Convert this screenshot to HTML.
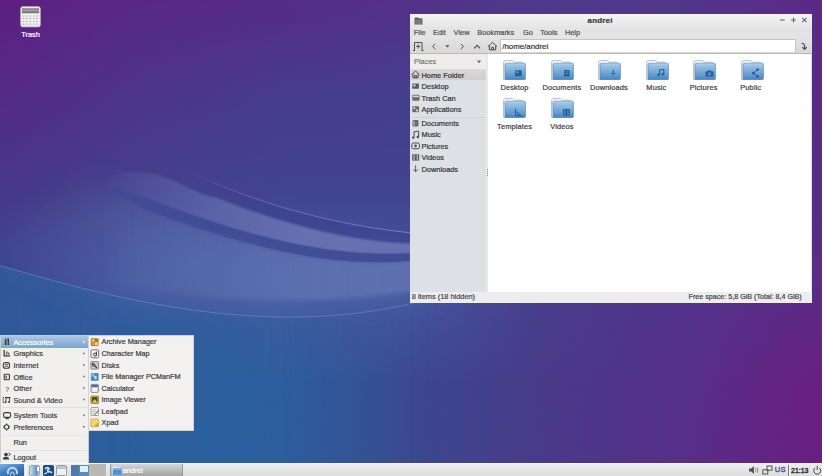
<!DOCTYPE html>
<html><head><meta charset="utf-8">
<style>
*{margin:0;padding:0;box-sizing:border-box}
html,body{width:822px;height:476px;overflow:hidden}
body{position:relative;font-family:"Liberation Sans",sans-serif;font-size:7.4px;color:#3c3c3c;background:#42408a}
.abs{position:absolute}
#wall{position:absolute;left:0;top:0;width:822px;height:476px;overflow:hidden}
.wl{position:absolute;left:0;top:0;width:822px;height:476px}
.t{position:absolute;white-space:nowrap;line-height:10px;-webkit-text-stroke:0.2px currentColor}
/* window */
#win{position:absolute;left:410px;top:14px;width:402px;height:289px;background:#dcdcdc;overflow:hidden}
#title{position:absolute;left:0;top:0;width:402px;height:13px;background:linear-gradient(#f4f4f4,#e6e6e6)}
#menubar{position:absolute;left:0;top:13px;width:402px;height:12px;background:#e4e4e4;color:#505050}
#toolbar{position:absolute;left:0;top:25px;width:402px;height:15px;background:linear-gradient(#e2e2e2,#d8d8d8);border-bottom:1px solid #b9b9b9}
#side{position:absolute;left:0;top:40px;width:76px;height:238px;background:#dde1e6}
#sidehead{position:absolute;left:0;top:0;width:77px;height:15px;background:#eeedeb}
#main{position:absolute;left:78px;top:40px;width:323px;height:238px;background:#fff}
#status{position:absolute;left:0;top:278px;width:402px;height:11px;background:#ededed}
.lab{color:#3a3a3a}
.mi{color:#3a3a3a}
.menu{position:absolute;background:#f0efee;border:1px solid #c9c9c9}
</style></head><body>
<div id="wall"><!--WALL-->
<div class="wl" style="background:linear-gradient(to right,#5e1f82 0px,#5a2886 137px,#562c87 274px,#543188 411px,#4f3a8c 548px,#52368b 685px,#5c2a86 822px);"></div>
<div class="wl" style="background:linear-gradient(to right,#552a86 0px,#4d3589 137px,#473c8b 274px,#443f8c 411px,#4a3a8b 548px,#523289 685px,#5a2b86 822px);-webkit-mask-image:linear-gradient(to bottom,transparent 0px,#000 95px);mask-image:linear-gradient(to bottom,transparent 0px,#000 95px);"></div>
<div class="wl" style="background:linear-gradient(to right,#473988 0px,#45408c 137px,#42448e 274px,#42448e 411px,#463f8c 548px,#4e368a 685px,#582c86 822px);-webkit-mask-image:linear-gradient(to bottom,transparent 95px,#000 190px);mask-image:linear-gradient(to bottom,transparent 95px,#000 190px);"></div>
<div class="wl" style="background:linear-gradient(to right,#3a4890 0px,#44549c 137px,#4a5ca2 274px,#4658a0 411px,#483d8b 548px,#52338a 685px,#5a2c86 822px);-webkit-mask-image:linear-gradient(to bottom,transparent 190px,#000 285px);mask-image:linear-gradient(to bottom,transparent 190px,#000 285px);"></div>
<div class="wl" style="background:linear-gradient(to right,#2d5e9e 0px,#2a62a0 137px,#2b60a0 274px,#3c488f 411px,#493a89 548px,#56308a 685px,#6a2080 822px);-webkit-mask-image:linear-gradient(to bottom,transparent 285px,#000 380px);mask-image:linear-gradient(to bottom,transparent 285px,#000 380px);"></div>
<div class="wl" style="background:linear-gradient(to right,#2d5e9e 0px,#2a62a0 137px,#2b60a0 274px,#3c488f 411px,#493a89 548px,#572e88 685px,#6a1e80 822px);-webkit-mask-image:linear-gradient(to bottom,transparent 380px,#000 476px);mask-image:linear-gradient(to bottom,transparent 380px,#000 476px);"></div>
<!--/WALL-->
<svg class="wl" width="822" height="476" viewBox="0 0 822 476">
<defs>
<filter id="b12" x="-50%" y="-50%" width="200%" height="200%"><feGaussianBlur stdDeviation="16"/></filter>
<filter id="b3" x="-20%" y="-50%" width="140%" height="200%"><feGaussianBlur stdDeviation="2"/></filter>
<filter id="b1" x="-10%" y="-50%" width="120%" height="200%"><feGaussianBlur stdDeviation="0.7"/></filter>
<linearGradient id="fadeC" gradientUnits="userSpaceOnUse" x1="100" y1="0" x2="440" y2="0">
<stop offset="0" stop-color="#5a6eae" stop-opacity="0"/>
<stop offset="0.3" stop-color="#5a6eae" stop-opacity="0.5"/>
<stop offset="0.6" stop-color="#5e70b0" stop-opacity="0.9"/>
<stop offset="1" stop-color="#6070b0" stop-opacity="1"/>
</linearGradient>
<linearGradient id="fadeA" gradientUnits="userSpaceOnUse" x1="100" y1="0" x2="440" y2="0">
<stop offset="0" stop-color="#5c64a8" stop-opacity="0"/>
<stop offset="0.15" stop-color="#5c64a8" stop-opacity="0.45"/>
<stop offset="0.35" stop-color="#6068ac" stop-opacity="0.85"/>
<stop offset="0.6" stop-color="#6670b0" stop-opacity="1"/>
<stop offset="1" stop-color="#6a70b2" stop-opacity="1"/>
</linearGradient>
<filter id="b15" x="-20%" y="-50%" width="140%" height="200%"><feGaussianBlur stdDeviation="1.3"/></filter>
<linearGradient id="fadeB" gradientUnits="userSpaceOnUse" x1="100" y1="0" x2="440" y2="0">
<stop offset="0" stop-color="#3f4c95" stop-opacity="0"/>
<stop offset="0.1" stop-color="#3f4c95" stop-opacity="0.8"/>
<stop offset="1" stop-color="#3f4c95" stop-opacity="0.9"/>
</linearGradient>
<linearGradient id="fadeL" gradientUnits="userSpaceOnUse" x1="185" y1="0" x2="440" y2="0">
<stop offset="0" stop-color="#8a90d0" stop-opacity="0"/>
<stop offset="0.25" stop-color="#8a90d0" stop-opacity="0.45"/>
<stop offset="1" stop-color="#8a94d4" stop-opacity="0.75"/>
</linearGradient>
<linearGradient id="fadeBl" gradientUnits="userSpaceOnUse" x1="0" y1="0" x2="440" y2="0">
<stop offset="0" stop-color="#2e5a9b" stop-opacity="0.85"/>
<stop offset="0.5" stop-color="#2c5e9e" stop-opacity="0.5"/>
<stop offset="1" stop-color="#35529a" stop-opacity="0"/>
</linearGradient>
<linearGradient id="fadeD" gradientUnits="userSpaceOnUse" x1="190" y1="0" x2="440" y2="0">
<stop offset="0" stop-color="#383a86" stop-opacity="0"/>
<stop offset="0.3" stop-color="#383a86" stop-opacity="0.35"/>
<stop offset="1" stop-color="#383a86" stop-opacity="0.4"/>
</linearGradient>
<linearGradient id="vC" gradientUnits="userSpaceOnUse" x1="0" y1="240" x2="0" y2="300">
<stop offset="0" stop-color="#6470b0" stop-opacity="0.9"/>
<stop offset="1" stop-color="#5a74b2" stop-opacity="0.9"/>
</linearGradient>
<linearGradient id="fadeS" gradientUnits="userSpaceOnUse" x1="0" y1="0" x2="440" y2="0">
<stop offset="0" stop-color="#5670ae" stop-opacity="0.05"/>
<stop offset="0.4" stop-color="#5670ae" stop-opacity="0.5"/>
<stop offset="1" stop-color="#5670ae" stop-opacity="0.6"/>
</linearGradient>
</defs>
<path d="M0.0 265.6 L6.0 267.4 L12.0 269.1 L18.0 270.8 L24.0 272.5 L30.0 274.2 L36.0 275.9 L42.0 277.6 L48.0 279.2 L54.0 280.8 L60.0 282.4 L66.0 284.0 L72.0 285.5 L78.0 287.1 L84.0 288.6 L90.0 290.0 L96.0 291.5 L102.0 292.9 L108.0 294.2 L114.0 295.6 L120.0 296.9 L126.0 298.2 L132.0 299.4 L138.0 300.7 L144.0 301.8 L150.0 303.0 L156.0 304.1 L162.0 305.1 L168.0 306.2 L174.0 307.2 L180.0 308.1 L186.0 309.0 L192.0 309.9 L198.0 310.7 L204.0 311.5 L210.0 312.2 L216.0 312.9 L222.0 313.5 L228.0 314.1 L234.0 314.6 L240.0 315.1 L246.0 315.5 L252.0 315.9 L258.0 316.2 L264.0 316.5 L270.0 316.7 L276.0 316.9 L282.0 317.0 L288.0 317.0 L294.0 317.0 L300.0 316.9 L306.0 316.8 L312.0 316.6 L318.0 316.3 L324.0 316.0 L330.0 315.6 L336.0 315.2 L342.0 314.7 L348.0 314.1 L354.0 313.4 L360.0 312.7 L366.0 311.9 L372.0 311.0 L378.0 310.1 L384.0 309.1 L390.0 308.0 L396.0 306.8 L402.0 305.6 L408.0 304.3 L412.0 303.4 L440.0 297.0 L440.0 476.0 L0.0 476.0 Z" fill="url(#fadeBl)" filter="url(#b1)"/>
<path d="M0.0 228.0 L40.0 215.0 L70.0 200.0 L100.0 186.5 L108.0 188.5 L120.0 195.0 L132.0 202.0 L142.0 208.0 L150.0 210.7 L156.0 213.0 L162.0 215.2 L168.0 217.4 L174.0 219.6 L180.0 221.7 L186.0 223.8 L192.0 225.8 L198.0 227.9 L204.0 229.9 L210.0 231.8 L216.0 233.7 L222.0 235.6 L228.0 237.4 L234.0 239.1 L240.0 240.9 L246.0 242.5 L252.0 244.1 L258.0 245.7 L264.0 247.2 L270.0 248.6 L276.0 250.0 L282.0 251.3 L288.0 252.5 L294.0 253.7 L300.0 254.8 L306.0 255.9 L312.0 256.9 L318.0 257.8 L324.0 258.6 L330.0 259.3 L336.0 260.0 L342.0 260.6 L348.0 261.1 L354.0 261.5 L360.0 261.8 L366.0 262.1 L372.0 262.2 L378.0 262.3 L384.0 262.2 L390.0 262.1 L396.0 261.9 L402.0 261.6 L408.0 261.1 L412.0 260.8 L440.0 258.4 L440.0 287.2 L412.0 291.1 L406.0 292.0 L400.0 292.8 L394.0 293.6 L388.0 294.3 L382.0 295.0 L376.0 295.6 L370.0 296.2 L364.0 296.8 L358.0 297.3 L352.0 297.8 L346.0 298.2 L340.0 298.6 L334.0 298.9 L328.0 299.2 L322.0 299.5 L316.0 299.7 L310.0 299.9 L304.0 300.1 L298.0 300.2 L292.0 300.2 L286.0 300.2 L280.0 300.2 L274.0 300.2 L268.0 300.0 L262.0 299.9 L256.0 299.7 L250.0 299.5 L244.0 299.2 L238.0 298.9 L232.0 298.5 L226.0 298.1 L220.0 297.7 L214.0 297.2 L208.0 296.7 L202.0 296.1 L196.0 295.5 L190.0 294.9 L184.0 294.2 L144.0 301.8 L138.0 300.7 L132.0 299.4 L126.0 298.2 L120.0 296.9 L114.0 295.6 L108.0 294.2 L102.0 292.9 L96.0 291.5 L90.0 290.0 L84.0 288.6 L78.0 287.1 L72.0 285.5 L66.0 284.0 L60.0 282.4 L54.0 280.8 L48.0 279.2 L42.0 277.6 L36.0 275.9 L30.0 274.2 L24.0 272.5 L18.0 270.8 L12.0 269.1 L6.0 267.4 L0.0 265.6 Z" fill="url(#fadeS)" filter="url(#b12)"/>
<path d="M100.0 186.5 L108.0 188.5 L120.0 195.0 L132.0 202.0 L142.0 208.0 L150.0 210.7 L156.0 213.0 L162.0 215.2 L168.0 217.4 L174.0 219.6 L180.0 221.7 L186.0 223.8 L192.0 225.8 L198.0 227.9 L204.0 229.9 L210.0 231.8 L216.0 233.7 L222.0 235.6 L228.0 237.4 L234.0 239.1 L240.0 240.9 L246.0 242.5 L252.0 244.1 L258.0 245.7 L264.0 247.2 L270.0 248.6 L276.0 250.0 L282.0 251.3 L288.0 252.5 L294.0 253.7 L300.0 254.8 L306.0 255.9 L312.0 256.9 L318.0 257.8 L324.0 258.6 L330.0 259.3 L336.0 260.0 L342.0 260.6 L348.0 261.1 L354.0 261.5 L360.0 261.8 L366.0 262.1 L372.0 262.2 L378.0 262.3 L384.0 262.2 L390.0 262.1 L396.0 261.9 L402.0 261.6 L408.0 261.1 L412.0 260.8 L440.0 258.4 L440.0 287.2 L412.0 291.1 L406.0 292.0 L400.0 292.8 L394.0 293.6 L388.0 294.3 L382.0 295.0 L376.0 295.6 L370.0 296.2 L364.0 296.8 L358.0 297.3 L352.0 297.8 L346.0 298.2 L340.0 298.6 L334.0 298.9 L328.0 299.2 L322.0 299.5 L316.0 299.7 L310.0 299.9 L304.0 300.1 L298.0 300.2 L292.0 300.2 L286.0 300.2 L280.0 300.2 L274.0 300.2 L268.0 300.0 L262.0 299.9 L256.0 299.7 L250.0 299.5 L244.0 299.2 L238.0 298.9 L232.0 298.5 L226.0 298.1 L220.0 297.7 L214.0 297.2 L208.0 296.7 L202.0 296.1 L196.0 295.5 L190.0 294.9 L184.0 294.2 L178.0 293.5 L172.0 292.7 L166.0 291.9 L160.0 291.0 L154.0 290.1 L148.0 289.2 L142.0 288.2 L136.0 287.2 L130.0 286.1 L124.0 285.0 L118.0 283.9 L112.0 282.7 L106.0 281.4 L100.0 280.2 Z" fill="url(#fadeC)" filter="url(#b3)"/>
<path d="M160.0 157.8 L166.0 160.8 L172.0 163.8 L178.0 166.8 L184.0 169.6 L190.0 172.4 L196.0 175.1 L202.0 177.8 L208.0 180.4 L214.0 182.9 L220.0 185.4 L226.0 187.8 L232.0 190.1 L238.0 192.4 L244.0 194.6 L250.0 196.7 L256.0 198.8 L262.0 200.8 L268.0 202.8 L274.0 204.7 L280.0 206.6 L286.0 208.3 L292.0 210.1 L298.0 211.7 L304.0 213.3 L310.0 214.9 L316.0 216.4 L322.0 217.8 L328.0 219.2 L334.0 220.5 L340.0 221.8 L346.0 223.0 L352.0 224.2 L358.0 225.3 L364.0 226.4 L370.0 227.4 L376.0 228.3 L382.0 229.2 L388.0 230.1 L394.0 230.9 L400.0 231.6 L406.0 232.3 L412.0 233.0 L440.0 236.0 L440.0 244.8 L412.0 243.8 L408.0 243.6 L402.0 243.3 L396.0 242.9 L390.0 242.5 L384.0 241.9 L378.0 241.3 L372.0 240.5 L366.0 239.7 L360.0 238.8 L354.0 237.9 L348.0 236.8 L342.0 235.7 L336.0 234.5 L330.0 233.3 L324.0 231.9 L318.0 230.5 L312.0 229.1 L306.0 227.5 L300.0 225.9 L294.0 224.3 L288.0 222.6 L282.0 220.8 L276.0 218.9 L270.0 217.0 L264.0 215.1 L258.0 213.1 L252.0 211.0 L246.0 208.9 L240.0 206.7 L234.0 204.5 L228.0 202.3 L222.0 200.0 L216.0 197.6 L212.0 196.8 L208.0 195.9 L204.0 194.7 L200.0 193.2 L196.0 191.6 L192.0 189.7 L188.0 187.8 L184.0 185.8 L180.0 183.8 L176.0 181.9 L172.0 180.2 L168.0 178.5 L164.0 177.0 L160.0 175.8 Z" fill="url(#fadeD)"/>
<path d="M100.0 186.0 L106.0 181.0 L112.0 175.2 L116.0 174.2 L120.0 173.3 L124.0 172.7 L128.0 172.3 L132.0 172.1 L136.0 172.0 L140.0 172.2 L144.0 172.5 L148.0 173.0 L152.0 173.7 L156.0 174.6 L160.0 175.8 L164.0 177.0 L168.0 178.5 L172.0 180.2 L176.0 181.9 L180.0 183.8 L184.0 185.8 L188.0 187.8 L192.0 189.7 L196.0 191.6 L200.0 193.2 L204.0 194.7 L208.0 195.9 L212.0 196.8 L216.0 197.6 L222.0 200.0 L228.0 202.3 L234.0 204.5 L240.0 206.7 L246.0 208.9 L252.0 211.0 L258.0 213.1 L264.0 215.1 L270.0 217.0 L276.0 218.9 L282.0 220.8 L288.0 222.6 L294.0 224.3 L300.0 225.9 L306.0 227.5 L312.0 229.1 L318.0 230.5 L324.0 231.9 L330.0 233.3 L336.0 234.5 L342.0 235.7 L348.0 236.8 L354.0 237.9 L360.0 238.8 L366.0 239.7 L372.0 240.5 L378.0 241.3 L384.0 241.9 L390.0 242.5 L396.0 242.9 L402.0 243.3 L408.0 243.6 L412.0 243.8 L440.0 244.8 L440.0 251.2 L412.0 253.0 L408.0 253.2 L402.0 253.5 L396.0 253.7 L390.0 253.8 L384.0 253.8 L378.0 253.7 L372.0 253.5 L366.0 253.3 L360.0 252.9 L354.0 252.5 L348.0 251.9 L342.0 251.3 L336.0 250.6 L330.0 249.9 L324.0 249.0 L318.0 248.1 L312.0 247.1 L306.0 246.0 L300.0 244.9 L294.0 243.7 L288.0 242.4 L282.0 241.1 L276.0 239.7 L270.0 238.3 L264.0 236.8 L258.0 235.2 L252.0 233.6 L246.0 231.9 L240.0 230.2 L234.0 228.4 L228.0 226.6 L222.0 224.8 L216.0 222.9 L210.0 220.9 L204.0 218.9 L198.0 216.9 L192.0 214.9 L186.0 212.8 L180.0 210.6 L174.0 208.5 L168.0 206.3 L162.0 204.1 L156.0 201.9 L150.0 199.6 L142.0 197.5 L132.0 194.0 L122.0 190.5 L112.0 187.5 L100.0 186.0 Z" fill="url(#fadeA)" filter="url(#b15)"/>
<path d="M100.0 186.0 L112.0 187.5 L122.0 190.5 L132.0 194.0 L142.0 197.5 L150.0 199.6 L156.0 201.9 L162.0 204.1 L168.0 206.3 L174.0 208.5 L180.0 210.6 L186.0 212.8 L192.0 214.9 L198.0 216.9 L204.0 218.9 L210.0 220.9 L216.0 222.9 L222.0 224.8 L228.0 226.6 L234.0 228.4 L240.0 230.2 L246.0 231.9 L252.0 233.6 L258.0 235.2 L264.0 236.8 L270.0 238.3 L276.0 239.7 L282.0 241.1 L288.0 242.4 L294.0 243.7 L300.0 244.9 L306.0 246.0 L312.0 247.1 L318.0 248.1 L324.0 249.0 L330.0 249.9 L336.0 250.6 L342.0 251.3 L348.0 251.9 L354.0 252.5 L360.0 252.9 L366.0 253.3 L372.0 253.5 L378.0 253.7 L384.0 253.8 L390.0 253.8 L396.0 253.7 L402.0 253.5 L408.0 253.2 L412.0 253.0 L440.0 251.2 L440.0 258.4 L412.0 260.8 L408.0 261.1 L402.0 261.6 L396.0 261.9 L390.0 262.1 L384.0 262.2 L378.0 262.3 L372.0 262.2 L366.0 262.1 L360.0 261.8 L354.0 261.5 L348.0 261.1 L342.0 260.6 L336.0 260.0 L330.0 259.3 L324.0 258.6 L318.0 257.8 L312.0 256.9 L306.0 255.9 L300.0 254.8 L294.0 253.7 L288.0 252.5 L282.0 251.3 L276.0 250.0 L270.0 248.6 L264.0 247.2 L258.0 245.7 L252.0 244.1 L246.0 242.5 L240.0 240.9 L234.0 239.1 L228.0 237.4 L222.0 235.6 L216.0 233.7 L210.0 231.8 L204.0 229.9 L198.0 227.9 L192.0 225.8 L186.0 223.8 L180.0 221.7 L174.0 219.6 L168.0 217.4 L162.0 215.2 L156.0 213.0 L150.0 210.7 L142.0 208.0 L132.0 202.0 L120.0 195.0 L108.0 188.5 L100.0 186.5 Z" fill="url(#fadeB)" filter="url(#b1)"/>
<path d="M160.0 157.8 L166.0 160.8 L172.0 163.8 L178.0 166.8 L184.0 169.6 L190.0 172.4 L196.0 175.1 L202.0 177.8 L208.0 180.4 L214.0 182.9 L220.0 185.4 L226.0 187.8 L232.0 190.1 L238.0 192.4 L244.0 194.6 L250.0 196.7 L256.0 198.8 L262.0 200.8 L268.0 202.8 L274.0 204.7 L280.0 206.6 L286.0 208.3 L292.0 210.1 L298.0 211.7 L304.0 213.3 L310.0 214.9 L316.0 216.4 L322.0 217.8 L328.0 219.2 L334.0 220.5 L340.0 221.8 L346.0 223.0 L352.0 224.2 L358.0 225.3 L364.0 226.4 L370.0 227.4 L376.0 228.3 L382.0 229.2 L388.0 230.1 L394.0 230.9 L400.0 231.6 L406.0 232.3 L412.0 233.0 L440.0 236.0" stroke="url(#fadeL)" stroke-width="1" fill="none" filter="url(#b1)"/>
<path d="M0.0 265.6 L6.0 267.4 L12.0 269.1 L18.0 270.8 L24.0 272.5 L30.0 274.2 L36.0 275.9 L42.0 277.6 L48.0 279.2 L54.0 280.8 L60.0 282.4 L66.0 284.0 L72.0 285.5 L78.0 287.1 L84.0 288.6 L90.0 290.0 L96.0 291.5 L102.0 292.9 L108.0 294.2 L114.0 295.6 L120.0 296.9 L126.0 298.2 L132.0 299.4 L138.0 300.7 L144.0 301.8 L150.0 303.0 L156.0 304.1 L162.0 305.1 L168.0 306.2 L174.0 307.2 L180.0 308.1 L186.0 309.0 L192.0 309.9 L198.0 310.7 L204.0 311.5 L210.0 312.2 L216.0 312.9 L222.0 313.5 L228.0 314.1 L234.0 314.6 L240.0 315.1 L246.0 315.5 L252.0 315.9 L258.0 316.2 L264.0 316.5 L270.0 316.7 L276.0 316.9 L282.0 317.0 L288.0 317.0 L294.0 317.0 L300.0 316.9 L306.0 316.8 L312.0 316.6 L318.0 316.3 L324.0 316.0 L330.0 315.6 L336.0 315.2 L342.0 314.7 L348.0 314.1 L354.0 313.4 L360.0 312.7 L366.0 311.9 L372.0 311.0 L378.0 310.1 L384.0 309.1 L390.0 308.0 L396.0 306.8 L402.0 305.6 L408.0 304.3 L412.0 303.4 L440.0 297.0" stroke="#6e8cc8" stroke-width="1" fill="none" opacity="0.6" filter="url(#b1)"/>
</svg>
</div>

<!-- Trash -->
<svg class="abs" style="left:20px;top:5.5px" width="21" height="22" viewBox="0 0 21 22">
<rect x="0.8" y="0.8" width="19.4" height="20" rx="1.8" fill="#f0f0f0" stroke="#d8d8d8" stroke-width="0.8"/>
<defs><linearGradient id="tband" x1="0" y1="0" x2="0" y2="1"><stop offset="0" stop-color="#7a7a7a"/><stop offset="0.5" stop-color="#a0a0a0"/><stop offset="1" stop-color="#5e5e5e"/></linearGradient></defs>
<rect x="1.9" y="2.3" width="17.2" height="4.9" fill="url(#tband)"/>
<g fill="#a8a8a8">
<rect x="2.6" y="9.5" width="1.8" height="1"/><rect x="5.8" y="9.5" width="1.8" height="1"/><rect x="9.4" y="9.5" width="1.8" height="1"/><rect x="12.9" y="9.5" width="1.8" height="1"/><rect x="16" y="9.5" width="1.8" height="1"/>
<rect x="2.6" y="12.1" width="1.8" height="1"/><rect x="5.8" y="12.1" width="1.8" height="1"/><rect x="9.4" y="12.1" width="1.8" height="1"/><rect x="12.9" y="12.1" width="1.8" height="1"/><rect x="16" y="12.1" width="1.8" height="1"/>
<rect x="2.6" y="15" width="1.8" height="1"/><rect x="5.8" y="15" width="1.8" height="1"/><rect x="9.4" y="15" width="1.8" height="1"/><rect x="12.9" y="15" width="1.8" height="1"/><rect x="16" y="15" width="1.8" height="1"/>
<rect x="2.6" y="17.7" width="1.8" height="1"/><rect x="5.8" y="17.7" width="1.8" height="1"/><rect x="9.4" y="17.7" width="1.8" height="1"/><rect x="12.9" y="17.7" width="1.8" height="1"/><rect x="16" y="17.7" width="1.8" height="1"/>
</g>
<path d="M7.2 8.5 V20 M13.8 8.5 V20" stroke="#e2e2e2" stroke-width="0.8"/>
</svg>
<div class="t" style="left:21.2px;top:29.5px;color:#fff">Trash</div>

<!-- File manager window -->
<svg width="0" height="0" style="position:absolute">
<defs>
<linearGradient id="fblue" x1="0" y1="0" x2="0" y2="1">
<stop offset="0" stop-color="#a7cbeb"/><stop offset="0.55" stop-color="#72a8d8"/><stop offset="1" stop-color="#4585c4"/>
</linearGradient>
<symbol id="folder" viewBox="0 0 23 20">
<path d="M0.5 3.2 Q0.5 0.6 2.8 0.6 L9.6 0.6 L11.2 2.2 L18.6 2.2 Q19.6 2.2 19.6 3.2 L19.6 19.3 L0.5 19.3 Z" fill="#fbfbfb" stroke="#ababab" stroke-width="0.8"/>
<path d="M1.1 4 V18.8" stroke="#d2d2d2" stroke-width="0.7"/>
<rect x="2" y="3.2" width="20.4" height="16.5" rx="1" fill="url(#fblue)" stroke="#5a86b6" stroke-width="0.7"/>
<rect x="2.4" y="3.6" width="19.6" height="0.8" fill="#b4d4f0" opacity="0.8"/>
</symbol>
</defs>
</svg>
<div id="win">
  <div id="title">
    <svg class="abs" style="left:4px;top:3px" width="9" height="8" viewBox="0 0 9 8"><path d="M0.5 1.5 Q0.5 0.5 1.5 0.5 L4 0.5 L4.8 1.3 L7.5 1.3 Q8.5 1.3 8.5 2.3 L8.5 7.5 L0.5 7.5Z" fill="#5f5f5f"/><rect x="1.2" y="2.6" width="6.6" height="4.4" fill="#7a7a7a"/></svg>
    <div class="t" style="left:177.6px;top:1.9px;font-weight:bold;font-size:8px;color:#3a3a3a;letter-spacing:0.15px">andrei</div>
    <svg class="abs" style="left:369px;top:2px" width="30" height="8" viewBox="0 0 30 8">
      <path d="M1 4 H5.6" stroke="#6a6a6a" stroke-width="1.1"/>
      <path d="M12 4 H17 M14.5 1.5 V6.5" stroke="#6a6a6a" stroke-width="1.1"/>
      <path d="M23.2 1.8 L27.6 6.2 M27.6 1.8 L23.2 6.2" stroke="#6a6a6a" stroke-width="1.1"/>
    </svg>
  </div>
  <div id="menubar">
    <div class="t" style="left:3.8px;top:0.6px">File</div>
    <div class="t" style="left:23px;top:0.6px">Edit</div>
    <div class="t" style="left:43.6px;top:0.6px">View</div>
    <div class="t" style="left:67.3px;top:0.6px">Bookmarks</div>
    <div class="t" style="left:112.9px;top:0.6px">Go</div>
    <div class="t" style="left:130.3px;top:0.6px">Tools</div>
    <div class="t" style="left:154.9px;top:0.6px">Help</div>
  </div>
  <div id="toolbar">
    <svg class="abs" style="left:0;top:0" width="90" height="15" viewBox="0 0 90 15">
      <g fill="none" stroke="#505050" stroke-width="1">
        <path d="M4.5 11.5 V3.5 H12 V11.5 M3 11.5 H5 M11.5 11.5 H13.5"/>
        <path d="M8.2 5.3 V9.5 M6.1 7.4 H10.3"/>
        <path d="M25.3 4.8 L22.6 7.4 L25.3 10"/>
        <path d="M50.8 4.8 L53.5 7.4 L50.8 10"/>
        <path d="M64.2 9.3 L67.2 6.3 L70.2 9.3" stroke-width="1.2"/>
      </g>
      <path d="M35.3 6.2 H39.5 L37.4 8.4 Z" fill="#505050"/>
      <g fill="none" stroke="#4a4a4a" stroke-width="1">
        <path d="M78 7.6 L82.5 3.3 L87 7.6 M79.3 6.5 V10.8 H85.7 V6.5"/>
        <path d="M81.6 10.8 V8.4 H83.4 V10.8"/>
      </g>
    </svg>
    <div class="abs" style="left:89.6px;top:0.4px;width:296.6px;height:13.4px;background:#fff;border:1px solid #c4c4c4;border-bottom-color:#d8d8d8"></div>
    <div class="t" style="left:92.2px;top:2.6px;color:#333;font-size:7.9px">/home/andrei</div>
    <svg class="abs" style="left:389px;top:3px" width="10" height="9" viewBox="0 0 10 9"><path d="M2.6 1.3 Q5.6 1.3 5.6 4.3 V7.2 M3.4 5.2 L5.6 7.4 L7.8 5.2" fill="none" stroke="#4a4a4a" stroke-width="1.1"/></svg>
  </div>
  <div id="side">
    <div id="sidehead"><div class="t" style="left:4px;top:2.6px;color:#6a6a6a;-webkit-text-stroke:0.1px #6a6a6a">Places</div>
      <svg class="abs" style="left:66px;top:6px" width="6" height="4" viewBox="0 0 6 4"><path d="M0.8 0.6 H5.2 L3 3.2Z" fill="#6a6a6a"/></svg>
    </div>
    <div class="abs" style="left:0;top:15px;width:76px;height:10.5px;background:linear-gradient(#d8d8d8,#cfcfcf)"></div>
    <div class="abs" style="left:3px;top:62.5px;width:72px;height:1px;background:#cfd3d8"></div>
    <svg class="abs" style="left:0;top:14px" width="12" height="125" viewBox="0 0 12 125">
      <g fill="none" stroke="#4a4a4a" stroke-width="1">
        <path d="M1.8 6.8 L5.5 2.8 L9.3 6.8 M2.9 5.9 V9.8 H8.1 V5.9 M4.6 9.8 V7.5 H6.4 V9.8"/>
      </g>
      <rect x="2.3" y="15.5" width="6.6" height="5.3" rx="0.6" fill="#5a5a5a"/><rect x="3.3" y="16.4" width="2.3" height="2" fill="#cfcfcf"/>
      <rect x="2.3" y="26.8" width="7.2" height="6" rx="0.8" fill="#6a6a6a"/><rect x="3" y="27.6" width="5.8" height="1.6" fill="#d9d9d9"/>
      <rect x="2.3" y="38.3" width="6.8" height="6" rx="0.8" fill="#6a6a6a"/><rect x="3.2" y="39.2" width="2" height="2" fill="#d0d0d0"/><rect x="6" y="41.5" width="2.2" height="2" fill="#d0d0d0"/>
      <rect x="2.5" y="52" width="6" height="6.5" rx="1" fill="#6a6a6a"/><rect x="3.5" y="53" width="1" height="4.5" fill="#d0d0d0"/>
      <path d="M4 69.5 V63.8 L8.6 63 V69" fill="none" stroke="#4a4a4a" stroke-width="1"/><circle cx="3.2" cy="69.6" r="1.2" fill="#4a4a4a"/><circle cx="7.8" cy="69" r="1.2" fill="#4a4a4a"/>
      <rect x="1.8" y="75" width="7.6" height="5.8" rx="1.5" fill="none" stroke="#4a4a4a" stroke-width="1"/><circle cx="5.6" cy="77.9" r="1.3" fill="#4a4a4a"/>
      <rect x="2.2" y="86.3" width="7" height="6.3" fill="#5a5a5a"/><rect x="3.6" y="86.8" width="1" height="5.3" fill="#cfcfcf"/><rect x="6.8" y="86.8" width="1" height="5.3" fill="#cfcfcf"/>
      <path d="M5.6 97.5 V103.5 M3.2 101.3 L5.6 103.8 L8 101.3" fill="none" stroke="#4a4a4a" stroke-width="0.9"/>
    </svg>
    <div class="t" style="left:11.5px;top:16.6px;color:#333">Home Folder</div>
    <div class="t" style="left:11.5px;top:28.1px;color:#333">Desktop</div>
    <div class="t" style="left:11.5px;top:39.5px;color:#333">Trash Can</div>
    <div class="t" style="left:11.5px;top:51.1px;color:#333">Applications</div>
    <div class="t" style="left:11.5px;top:64.7px;color:#333">Documents</div>
    <div class="t" style="left:11.5px;top:76.4px;color:#333">Music</div>
    <div class="t" style="left:11.5px;top:87.7px;color:#333">Pictures</div>
    <div class="t" style="left:11.5px;top:99.4px;color:#333">Videos</div>
    <div class="t" style="left:11.5px;top:110.7px;color:#333">Downloads</div>
  </div>
  <div class="abs" style="left:76px;top:40px;width:2px;height:238px;background:#e9e9e9"></div>
  <div class="abs" style="left:76.5px;top:155px;width:1px;height:7px;background:repeating-linear-gradient(#8a8a8a 0 1px,transparent 1px 2px)"></div>
  <div id="main">
    <svg class="abs" style="left:15px;top:6px" width="23" height="20"><use href="#folder"/></svg>
    <svg class="abs" style="left:62.5px;top:6px" width="23" height="20"><use href="#folder"/></svg>
    <svg class="abs" style="left:110px;top:6px" width="23" height="20"><use href="#folder"/></svg>
    <svg class="abs" style="left:157.5px;top:6px" width="23" height="20"><use href="#folder"/></svg>
    <svg class="abs" style="left:205px;top:6px" width="23" height="20"><use href="#folder"/></svg>
    <svg class="abs" style="left:252.5px;top:6px" width="23" height="20"><use href="#folder"/></svg>
    <svg class="abs" style="left:15px;top:44px" width="23" height="20"><use href="#folder"/></svg>
    <svg class="abs" style="left:62.5px;top:44px" width="23" height="20"><use href="#folder"/></svg>
    <svg class="abs" style="left:0;top:0" width="323" height="70" viewBox="0 0 323 70">
      <g fill="#24609a">
        <rect x="27" y="16.2" width="6.8" height="6" rx="0.6"/>
        <rect x="76" y="16" width="5.6" height="6.6" rx="0.6"/>
        <rect x="217.5" y="17.3" width="8" height="5.2" rx="1"/>
        <rect x="220" y="16.4" width="3" height="1.2"/>
      </g>
      <g fill="none" stroke="#24609a" stroke-width="1">
        <path d="M125.3 15.6 V20.6 M123.3 18.8 L125.3 20.8 L127.3 18.8"/>
        <path d="M171.6 20.8 V16 L175.8 15.3 V20.1" stroke-width="1.1"/>
        <path d="M269.6 15.6 L265.4 19.2 L269.6 22.4"/>
      </g>
      <circle cx="170.6" cy="21" r="1.3" fill="#24609a"/><circle cx="174.8" cy="20.3" r="1.3" fill="#24609a"/>
      <circle cx="221.5" cy="19.9" r="1.4" fill="#7aaedc"/><circle cx="221.5" cy="19.9" r="0.7" fill="#24609a"/>
      <circle cx="269.6" cy="15.6" r="1.4" fill="#24609a"/><circle cx="265.4" cy="19.2" r="1.4" fill="#24609a"/><circle cx="269.6" cy="22.4" r="1.4" fill="#24609a"/>
      <rect x="28" y="17.2" width="2.2" height="2" fill="#6a9ac6"/><rect x="77" y="17.4" width="3.5" height="0.8" fill="#6a9ac6"/><rect x="77" y="19" width="3.5" height="0.8" fill="#6a9ac6"/>
      <path d="M27.6 54.8 V61.6 H33.8 M29 58.2 L32 61.2" fill="none" stroke="#24609a" stroke-width="1.1"/>
      <rect x="75" y="55" width="6.8" height="6.8" fill="#24609a"/><rect x="76.4" y="55.5" width="0.9" height="5.8" fill="#6a9ac6"/><rect x="79.5" y="55.5" width="0.9" height="5.8" fill="#6a9ac6"/>
    </svg>
    <div class="t lab" style="left:-3.5px;top:29.2px;width:60px;text-align:center;letter-spacing:0.15px">Desktop</div>
    <div class="t lab" style="left:43.9px;top:29.2px;width:60px;text-align:center;letter-spacing:0.15px">Documents</div>
    <div class="t lab" style="left:91.0px;top:29.2px;width:60px;text-align:center;letter-spacing:0.15px">Downloads</div>
    <div class="t lab" style="left:138.4px;top:29.2px;width:60px;text-align:center;letter-spacing:0.15px">Music</div>
    <div class="t lab" style="left:185.6px;top:29.2px;width:60px;text-align:center;letter-spacing:0.15px">Pictures</div>
    <div class="t lab" style="left:232.8px;top:29.2px;width:60px;text-align:center;letter-spacing:0.15px">Public</div>
    <div class="t lab" style="left:-3.4px;top:67.5px;width:60px;text-align:center;letter-spacing:0.15px">Templates</div>
    <div class="t lab" style="left:44.0px;top:67.5px;width:60px;text-align:center;letter-spacing:0.15px">Videos</div>
  </div>
  <div id="status">
    <div class="t" style="left:1.8px;top:-0.3px;color:#444">8 items (18 hidden)</div>
    <div class="t" style="left:278.6px;top:-0.3px;color:#444;font-size:7.15px">Free space: 5,8 GiB (Total: 8,4 GiB)</div>
  </div>
</div>

<!-- menu -->
<div class="abs" style="left:0;top:335px;width:89px;height:128px;background:#f1f0ef;border:1px solid #cdcdcd;border-bottom:none"></div>
<div class="abs" style="left:1px;top:335.8px;width:87px;height:11.8px;background:linear-gradient(#aac6e2,#7ea4cf)"></div>
<div class="abs" style="left:3px;top:407px;width:84px;height:1px;background:#dedddc"></div>
<div class="abs" style="left:3px;top:435px;width:84px;height:1px;background:#e6e5e4"></div>
<div class="abs" style="left:3px;top:449.5px;width:84px;height:1px;background:#e6e5e4"></div>
<div class="t mi" style="left:13.4px;top:337.5px;color:#fff">Accessories</div>
<div class="t mi" style="left:13.4px;top:349px">Graphics</div>
<div class="t mi" style="left:13.4px;top:360.9px">Internet</div>
<div class="t mi" style="left:13.4px;top:372.5px">Office</div>
<div class="t mi" style="left:13.4px;top:383.5px">Other</div>
<div class="t mi" style="left:13.4px;top:395.5px">Sound &amp; Video</div>
<div class="t mi" style="left:13.4px;top:411.4px">System Tools</div>
<div class="t mi" style="left:13.4px;top:422.6px">Preferences</div>
<div class="t mi" style="left:13.4px;top:437.7px">Run</div>
<div class="t mi" style="left:13.4px;top:453px">Logout</div>
<svg class="abs" style="left:0;top:335px" width="89" height="128" viewBox="0 0 89 128">
  <g fill="#fff"><path d="M83.3 5.6 L85.3 7 L83.3 8.4Z"/></g>
  <g fill="#555"><path d="M83.3 17.3 L85 18.5 L83.3 19.7Z M83.3 28.8 L85 30 L83.3 31.2Z M83.3 40.3 L85 41.5 L83.3 42.7Z M83.3 51.8 L85 53 L83.3 54.2Z M83.3 63.3 L85 64.5 L83.3 65.7Z M83.3 79 L85 80.2 L83.3 81.4Z M83.3 90.5 L85 91.7 L83.3 92.9Z"/></g>
  <g fill="#3a3a3a">
    <rect x="4.8" y="4.5" width="1.6" height="5.5"/><rect x="4.8" y="3.6" width="1.6" height="0.8"/><path d="M7.2 3.6 H9 V10 H7.6 V5.2 H7.2Z"/>
    <path d="M3.5 15 V21.5 H10.2 V20.3 H4.8 V15Z"/><rect x="6.2" y="16.5" width="1.2" height="3"/><rect x="8.2" y="17.5" width="1.1" height="2"/>
  </g>
  <g fill="none" stroke="#3a3a3a" stroke-width="1.1">
    <rect x="3.3" y="27.6" width="6.2" height="5.6" rx="2"/>
    <rect x="4.2" y="39.2" width="5.2" height="5.6" rx="0.6"/>
  </g>
  <g fill="#3a3a3a">
    <rect x="4.7" y="29.3" width="3.4" height="0.8"/><rect x="4.7" y="30.8" width="3.4" height="0.8"/>
    <rect x="5.6" y="40.6" width="1.2" height="3"/>
  </g>
  <text x="5.3" y="56.5" font-family="Liberation Sans" font-size="7" fill="#3a3a3a">?</text>
  <g fill="#3a3a3a">
    <rect x="2.6" y="62" width="1.4" height="1.2"/><rect x="2.6" y="64.3" width="1.4" height="1.2"/><rect x="2.6" y="66.6" width="1.4" height="1.2"/>
    <rect x="5" y="62" width="5.4" height="1.2"/><path d="M6 63 V67 M9.6 63 V66.5" stroke="#3a3a3a" stroke-width="0.9"/><circle cx="5.5" cy="67.3" r="1"/><circle cx="9.1" cy="66.9" r="1"/>
  </g>
  <g fill="none" stroke="#3a3a3a" stroke-width="1.1">
    <rect x="3.6" y="77.6" width="7" height="4.8" rx="1.5"/><path d="M5.5 83.6 H8.8"/>
    <circle cx="6.6" cy="92" r="2.2"/>
  </g>
  <g stroke="#3a3a3a" stroke-width="1.1"><path d="M6.6 88.4 V89.4 M6.6 94.6 V95.6 M3 92 H4 M9.2 92 H10.2"/></g>
  <g fill="#3a3a3a"><circle cx="6" cy="119.6" r="1.8"/><path d="M2.8 124.6 Q3 121.8 6 121.8 Q9 121.8 9.2 124.6Z"/><path d="M8.6 118 L10.6 119.3 L8.6 120.6" fill="none" stroke="#3a3a3a" stroke-width="0.9"/></g>
</svg>
<!-- submenu -->
<div class="abs" style="left:88px;top:335px;width:106px;height:96px;background:#f2f1f0;border:1px solid #d2d2d2"></div>
<div class="t mi" style="left:101.6px;top:337.4px;font-size:7.25px">Archive Manager</div>
<div class="t mi" style="left:101.6px;top:349px;font-size:7.25px">Character Map</div>
<div class="t mi" style="left:101.6px;top:360.5px;font-size:7.25px">Disks</div>
<div class="t mi" style="left:101.6px;top:372px;font-size:7.25px">File Manager PCManFM</div>
<div class="t mi" style="left:101.6px;top:383.6px;font-size:7.25px">Calculator</div>
<div class="t mi" style="left:101.6px;top:395.2px;font-size:7.25px">Image Viewer</div>
<div class="t mi" style="left:101.6px;top:406.7px;font-size:7.25px">Leafpad</div>
<div class="t mi" style="left:101.6px;top:418.1px;font-size:7.25px">Xpad</div>
<svg class="abs" style="left:88px;top:335px" width="14" height="96" viewBox="0 0 14 96">
  <rect x="2.8" y="3.3" width="7.8" height="7.6" rx="0.8" fill="#a87a2a"/><rect x="3.6" y="4" width="3" height="3" fill="#e8c060"/><rect x="6.8" y="7.2" width="3" height="3" fill="#f0d890"/><rect x="4" y="7.5" width="2" height="2.5" fill="#d8a848"/>
  <rect x="3" y="14.8" width="7.6" height="8" rx="1.2" fill="#f4f4f4" stroke="#666" stroke-width="0.9"/><circle cx="6.9" cy="19.6" r="1.5" fill="none" stroke="#333" stroke-width="0.9"/><rect x="7.9" y="16.5" width="0.9" height="4.3" fill="#333"/>
  <rect x="2.8" y="26.5" width="7.8" height="7.6" rx="0.8" fill="#c8c8c8" stroke="#7a7a7a" stroke-width="0.8"/><path d="M4 28 L9 33" stroke="#444" stroke-width="1.2"/><circle cx="5.6" cy="30" r="1.4" fill="none" stroke="#555" stroke-width="0.8"/>
  <rect x="2.8" y="38" width="7.8" height="7.8" rx="0.8" fill="#4a86c4"/><rect x="3.4" y="38.6" width="3" height="3" fill="#8ec0ea"/><rect x="6.5" y="41" width="2" height="3" fill="#d8ecfa"/>
  <rect x="3" y="49.4" width="7.4" height="8" rx="0.8" fill="#d8d8d8" stroke="#777" stroke-width="0.8"/><rect x="3.5" y="49.9" width="6.4" height="2.2" fill="#3d6fa8"/><rect x="4.2" y="53" width="5" height="3.8" fill="#f0f0f0"/>
  <rect x="2.8" y="61" width="7.8" height="7.6" rx="0.8" fill="#e0b030" stroke="#8a7040" stroke-width="0.7"/><rect x="4" y="62.2" width="5.4" height="5.2" fill="#3c4a2a"/><path d="M4 67.4 L6.5 64 L9.4 67.4Z" fill="#e8d040"/>
  <rect x="3" y="72.5" width="7.4" height="8" rx="0.6" fill="#f2f2f2" stroke="#8a8a8a" stroke-width="0.8"/><path d="M4.2 74.8 H8.6 M4.2 76.6 H8.6 M4.2 78.4 H7" stroke="#9a9a9a" stroke-width="0.6"/><path d="M6.6 80 L10.4 75.5" stroke="#555" stroke-width="0.9"/>
  <rect x="2.8" y="84" width="7.8" height="7.8" rx="0.6" fill="#f2d860" stroke="#b8a040" stroke-width="0.7"/><path d="M6 91.3 L10.3 87.2 V91.3Z" fill="#c8a830"/>
</svg>

<!-- taskbar -->
<div class="abs" style="left:0;top:463px;width:822px;height:13px;background:linear-gradient(#efefef,#dddddd)"></div>
<div class="abs" style="left:0;top:463px;width:822px;height:1px;background:#f8f8f8"></div>
<div class="abs" style="left:0;top:464px;width:24px;height:12px;background:linear-gradient(160deg,#7ab4e6,#3c7cc0 50%,#2a5f9c)"></div>
<svg class="abs" style="left:0;top:464px" width="24" height="12" viewBox="0 0 24 12">
  <path d="M8.2 10.2 A4.6 4.6 0 1 1 16.6 10.2" fill="none" stroke="#dcecf8" stroke-width="1.9" opacity="0.85"/>
  <path d="M10.4 11.6 Q10.6 8.2 12.4 8.2 Q14.2 8.2 14.4 11.6" fill="none" stroke="#c8e0f4" stroke-width="1.3" opacity="0.75"/>
</svg>
<div class="abs" style="left:25px;top:464px;width:2px;height:12px;background:#f4f4f4"></div>
<div class="abs" style="left:29.3px;top:464.8px;width:10.6px;height:11.2px;border-radius:2px;background:linear-gradient(90deg,#d0dae6,#7aa6d6 55%,#5c8cc4 75%,#b8c8dc);border:1px solid #9aa8b8"></div>
<div class="abs" style="left:37px;top:467px;width:2px;height:4px;background:#fff"></div>
<div class="abs" style="left:42.6px;top:465px;width:11px;height:11px;border-radius:1.5px;background:#1f4a78"></div>
<svg class="abs" style="left:42.6px;top:465px" width="11" height="11" viewBox="0 0 11 11"><path d="M2 4 Q4 1.5 6 3.5 Q4 5 5 7 Q7 6 9 8" fill="none" stroke="#bfe4f8" stroke-width="1.6"/><path d="M1.5 9 L4 7.5" stroke="#dff2fc" stroke-width="1.2"/></svg>
<div class="abs" style="left:56.3px;top:465px;width:11px;height:11px;border-radius:1.5px;background:linear-gradient(#b8c6d4 0 3px,#f0f0f0 3px);border:1px solid #9a9a9a"></div>
<div class="abs" style="left:71px;top:464.5px;width:8px;height:11.5px;background:#4d7bac"></div>
<div class="abs" style="left:79px;top:464.5px;width:9.6px;height:11.5px;background:#5e8ab8"></div>
<div class="abs" style="left:80px;top:465.5px;width:8px;height:6px;background:#e2ecf6"></div>
<div class="abs" style="left:88.6px;top:464px;width:17.5px;height:12px;background:#bbb7b3"></div>
<div class="abs" style="left:110px;top:464px;width:73px;height:12px;background:linear-gradient(#d6d6d6,#a4a4a4);border-left:1px solid #9a9a9a;border-right:1px solid #9a9a9a"></div>
<svg class="abs" style="left:112px;top:465px" width="10" height="10" viewBox="0 0 10 10"><path d="M0.5 2 Q0.5 1 1.5 1 L4 1 L5 2 L8.5 2 L8.5 9.5 L0.5 9.5Z" fill="#e8e8e8"/><rect x="1" y="3" width="8.5" height="6.8" fill="#4a92d8"/><rect x="1" y="3" width="8.5" height="2" fill="#7ab6ec"/></svg>
<div class="t" style="left:122.4px;top:465.6px;color:#fff">andrei</div>
<!-- tray -->
<svg class="abs" style="left:746px;top:464px" width="76" height="12" viewBox="0 0 76 12">
  <path d="M3 4.5 H5 L8 2.2 V9.8 L5 7.5 H3Z" fill="#555"/>
  <path d="M9.5 4.2 Q10.5 6 9.5 7.8 M11.2 3.2 Q12.8 6 11.2 8.8" fill="none" stroke="#777" stroke-width="0.8"/>
  <rect x="16.8" y="5.8" width="5" height="4.2" fill="none" stroke="#555" stroke-width="1"/>
  <rect x="21" y="2" width="5" height="4.2" fill="none" stroke="#555" stroke-width="1"/>
  <path d="M21.8 7.5 V6.2" stroke="#555" stroke-width="1"/>
</svg>
<div class="t" style="left:774.8px;top:465.4px;color:#3a4f9c;font-size:7.6px;-webkit-text-stroke:0.35px #3a4f9c;letter-spacing:0.3px">US</div>
<div class="abs" style="left:787.5px;top:465px;width:1px;height:11px;background:#777"></div>
<div class="abs" style="left:788.5px;top:465px;width:1px;height:11px;background:#fafafa"></div>
<div class="t" style="left:791px;top:465.6px;color:#2f2f2f;font-size:7px;-webkit-text-stroke:0.4px #2f2f2f">21:13</div>
<svg class="abs" style="left:812px;top:464px" width="10" height="12" viewBox="0 0 10 12">
  <path d="M3.2 3.8 A3.5 3.5 0 1 0 7.2 3.8" fill="none" stroke="#444" stroke-width="1"/>
  <path d="M5.2 1.8 V6" stroke="#444" stroke-width="1"/>
</svg>
</body></html>
